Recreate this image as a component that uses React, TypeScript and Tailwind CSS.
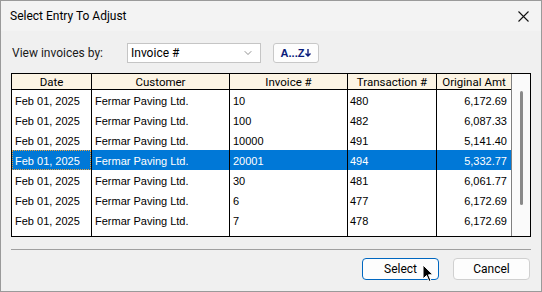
import { ChevronDown } from 'lucide-react'

interface Row {
  readonly date: string
  readonly customer: string
  readonly invoice: string
  readonly txn: string
  readonly amount: string
  readonly selected?: boolean
}

const rows: Row[] = [
  { date: 'Feb 01, 2025', customer: 'Fermar Paving Ltd.', invoice: '10', txn: '480', amount: '6,172.69' },
  { date: 'Feb 01, 2025', customer: 'Fermar Paving Ltd.', invoice: '100', txn: '482', amount: '6,087.33' },
  { date: 'Feb 01, 2025', customer: 'Fermar Paving Ltd.', invoice: '10000', txn: '491', amount: '5,141.40' },
  { date: 'Feb 01, 2025', customer: 'Fermar Paving Ltd.', invoice: '20001', txn: '494', amount: '5,332.77', selected: true },
  { date: 'Feb 01, 2025', customer: 'Fermar Paving Ltd.', invoice: '30', txn: '481', amount: '6,061.77' },
  { date: 'Feb 01, 2025', customer: 'Fermar Paving Ltd.', invoice: '6', txn: '477', amount: '6,172.69' },
  { date: 'Feb 01, 2025', customer: 'Fermar Paving Ltd.', invoice: '7', txn: '478', amount: '6,172.69' },
]

const ui = "font-['Roboto',sans-serif]"
const cell = "font-['Liberation_Sans',sans-serif] text-[11px]"

function Cursor() {
  return (
    <svg width="12" height="19" viewBox="0 0 12 19" className="absolute left-[421px] top-[263px]">
      <path d="M1 1 L1 15 L4.5 11.5 L7 17.5 L9 16.5 L6.5 10.8 L11 10.8 Z" fill="#000" stroke="#fff" strokeWidth="1" />
    </svg>
  )
}

function TableRow({ row }: { readonly row: Row }) {
  const base = row.selected ? 'bg-[#0078d7] text-white' : 'bg-white text-black'
  return (
    <div className={`flex h-[20px] ${cell}`}>
      <div className={`w-[79px] flex items-center pt-[2px] pl-[3px] ${base} ${row.selected ? 'outline outline-1 outline-dotted outline-[#e8a040] -outline-offset-1' : ''}`}>
        {row.date}
      </div>
      <div className="w-px bg-black" />
      <div className={`w-[137px] flex items-center pt-[2px] pl-[3px] ${base}`}>{row.customer}</div>
      <div className="w-px bg-black" />
      <div className={`w-[117px] flex items-center pt-[2px] pl-[3px] ${base}`}>{row.invoice}</div>
      <div className="w-px bg-black" />
      <div className={`w-[88px] flex items-center pt-[2px] pl-[2px] ${base}`}>{row.txn}</div>
      <div className="w-px bg-black" />
      <div className={`w-[74px] flex items-center justify-end pt-[2px] pr-[4px] ${base}`}>{row.amount}</div>
    </div>
  )
}

export default function App() {
  return (
    <div className={`relative w-[542px] h-[292px] bg-[#f0f0f0] border border-[#9a9a9a] flex flex-col ${ui}`}>
      <div className="h-[30px] bg-[#f3f3f3] flex items-center justify-between pl-[9px] pr-[12px]">
        <span className="text-[12px] text-black">Select Entry To Adjust</span>
        <svg width="11" height="11" viewBox="0 0 11 11">
          <path d="M0.5 0.5 L10.5 10.5 M10.5 0.5 L0.5 10.5" stroke="#111" strokeWidth="1.1" />
        </svg>
      </div>

      <div className="flex items-center mt-[12px] h-[20px]">
        <span className="pl-[11px] w-[126px] text-[12px] text-[#1a1a1a]">View invoices by:</span>
        <div className="w-[134px] h-[20px] bg-white border border-[#c5c5c5] flex items-center justify-between pl-[3px] pr-[6px]">
          <span className="text-[12px] text-black">Invoice #</span>
          <ChevronDown size={12} strokeWidth={1.3} className="text-[#555]" />
        </div>
        <div className="ml-[12px] w-[46px] h-[20px] bg-[#fdfdfd] border border-[#c8c8c8] rounded-[3px] flex items-center justify-center gap-[1px]">
          <span className="font-['Liberation_Sans',sans-serif] text-[11px] font-bold text-[#0a1a7a]">A...Z</span>
          <svg width="6" height="8" viewBox="0 0 6 8">
            <path d="M3 0 V7 M0.5 4.5 L3 7 L5.5 4.5" stroke="#0a1a7a" strokeWidth="1.4" fill="none" />
          </svg>
        </div>
      </div>

      <div className="ml-[10px] mt-[10px] w-[520px] h-[164px] border border-black bg-white flex">
        <div className="flex flex-col">
          <div className="flex h-[15px] bg-[#fcf4e4] text-[11.5px] text-black leading-[16px]">
            <div className="w-[79px] text-center">Date</div>
            <div className="w-px bg-black" />
            <div className="w-[137px] text-center">Customer</div>
            <div className="w-px bg-black" />
            <div className="w-[117px] text-center">Invoice #</div>
            <div className="w-px bg-black" />
            <div className="w-[88px] text-center">Transaction #</div>
            <div className="w-px bg-black" />
            <div className="w-[74px] text-center">Original Amt</div>
          </div>
          <div className="h-px bg-black" />
          {rows.map((r, i) => (
            <TableRow key={i} row={r} />
          ))}
          <div className="flex flex-1">
            <div className="w-[79px]" />
            <div className="w-px bg-black" />
            <div className="w-[137px]" />
            <div className="w-px bg-black" />
            <div className="w-[117px]" />
            <div className="w-px bg-black" />
            <div className="w-[88px]" />
            <div className="w-px bg-black" />
            <div className="w-[74px]" />
          </div>
        </div>
        <div className="w-px bg-[#808080]" />
        <div className="flex-1 bg-[#fafafa] flex justify-center pt-[17px]">
          <div className="w-[3px] h-[114px] bg-[#8a8a8a] rounded-full" />
        </div>
      </div>

      <div className="ml-[10px] mt-[12px] w-[520px] h-px bg-[#a0a0a0]" />

      <div className="flex justify-end gap-[14px] pr-[11px] mt-[8px]">
        <button type="button" className="w-[77px] h-[22px] bg-[#fdfdfd] border border-[#0067c0] rounded-[4px] text-[12px] text-black">
          Select
        </button>
        <button type="button" className="w-[77px] h-[22px] bg-[#fdfdfd] border border-[#d0d0d0] rounded-[4px] text-[12px] text-black">
          Cancel
        </button>
      </div>

      <Cursor />
    </div>
  )
}
